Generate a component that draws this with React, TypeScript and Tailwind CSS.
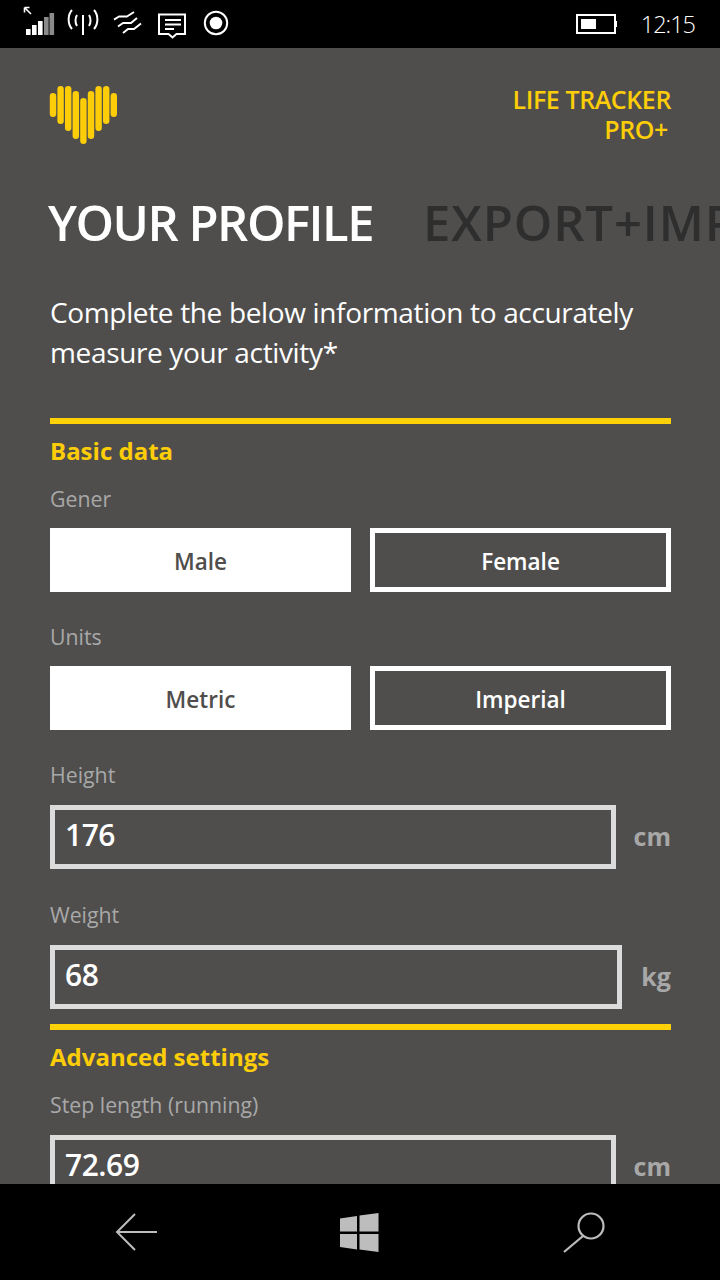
const bars = [
  [53, 93, 117],
  [60.6, 86, 124],
  [68.2, 86, 131],
  [75.8, 91, 139],
  [83.4, 98, 144],
  [91, 91, 139],
  [98.6, 86, 131],
  [106.2, 86, 124],
  [113.8, 93, 117],
];

function Logo() {
  return (
    <svg width="70" height="60" viewBox="49 85 70 60" className="block">
      {bars.map(([x, y1, y2]) => (
        <rect key={x} x={x - 3.2} y={y1} width="6.4" height={y2 - y1} rx="3.2" fill="#fdcd08" />
      ))}
    </svg>
  );
}

function StatusIcons() {
  return (
    <svg width="240" height="48" viewBox="0 0 240 48" className="block">
      {/* signal */}
      <path d="M24.5 7.5l6.5 6.500M24.500 7.500v5M24.500 7.500h5" stroke="#fff" strokeWidth="1.6" fill="none" />
      <rect x="26" y="29" width="4.6" height="6" fill="#fff" />
      <rect x="32" y="25" width="4.6" height="10" fill="#fff" />
      <rect x="38" y="21" width="4.6" height="14" fill="#fff" />
      <rect x="44" y="17" width="4.6" height="18" fill="#8a8a8a" />
      <rect x="49.5" y="13" width="4.6" height="22" fill="#8a8a8a" />
      {/* antenna */}
      <g stroke="#fff" strokeWidth="2" fill="none">
        <path d="M83 15v20" />
        <path d="M77 15c-2 3-2 8 0 11M89 15c2 3 2 8 0 11" />
        <path d="M72 10c-4.500 5-4.500 14 0 19M94 10c4.500 5 4.500 14 0 19" />
      </g>
      {/* data waves */}
      <g stroke="#fff" strokeWidth="2" fill="none" strokeLinejoin="round">
        <path d="M114 19.700l5-3.200h8l7-4.500" />
        <path d="M118 26.500l5-3.500h8l6-5" />
        <path d="M123 33l5-4h6l7-5.500" />
      </g>
      {/* message */}
      <path
        d="M159 14.500h26v19.500h-8.500l-4 3.500-4-3.500h-9.500z"
        stroke="#fff"
        strokeWidth="2"
        fill="none"
      />
      <path d="M165 20h16M165 24.500h16M165 29h9" stroke="#fff" strokeWidth="1.800" />
      {/* record */}
      <circle cx="216" cy="23" r="11.200" stroke="#fff" strokeWidth="2" fill="none" />
      <circle cx="216" cy="23" r="6.300" fill="#fff" />
    </svg>
  );
}

function Battery() {
  return (
    <svg width="41" height="20" viewBox="0 0 41 20" className="block">
      <rect x="1" y="1" width="38" height="18" stroke="#fff" strokeWidth="2" fill="none" />
      <rect x="5" y="5" width="15" height="10" fill="#fff" />
      <rect x="39" y="7" width="2" height="6" fill="#fff" />
    </svg>
  );
}

function BackIcon() {
  return (
    <svg width="44" height="40" viewBox="0 0 44 40" className="block">
      <path d="M20 2L2 20l18 18M2 20h40" stroke="#bdbdbd" strokeWidth="2" fill="none" />
    </svg>
  );
}

function WindowsIcon() {
  return (
    <svg width="39" height="39" viewBox="0 0 39 39" className="block">
      <path d="M0 5.500l17-2.500v15.500H0zM19.500 2.500L38.500 0v18.500h-19zM0 21h17v15.500L0 34zM19.500 21h19v18l-19-2.500z" fill="#bdbdbd" />
    </svg>
  );
}

function SearchIcon() {
  return (
    <svg width="44" height="42" viewBox="0 0 44 42" className="block">
      <circle cx="29" cy="15" r="12.500" stroke="#bdbdbd" strokeWidth="2.200" fill="none" />
      <path d="M21 25L2 41" stroke="#bdbdbd" strokeWidth="2.200" fill="none" />
    </svg>
  );
}

function ToggleRow({ left, right }: { left: string; right: string }) {
  return (
    <div className="grid grid-cols-2 gap-[19px] mt-[14px]">
      <div className="h-[64px] pt-[4px] bg-white flex items-center justify-center text-[22.5px] font-semibold text-[#4f4e4d]">
        {left}
      </div>
      <div className="h-[64px] pt-[4px] border-[5px] border-white flex items-center justify-center text-[22.5px] font-semibold text-white">
        {right}
      </div>
    </div>
  );
}

function Label({ text, className }: { text: string; className: string }) {
  return <div className={`h-[30px] leading-[30px] text-[21.3px] text-[#a8a8a8] ${className}`}>{text}</div>;
}

function NumberField({ value, unit, width }: { value: string; unit: string; width: string }) {
  return (
    <div className="flex items-center justify-between mt-[15px]">
      <div className={`h-[64px] pb-[6px] border-[5px] border-[#dcdcdc] flex items-center pl-[10px] text-[30px] font-semibold text-white tracking-[-0.5px] shrink-0 ${width}`}>
        {value}
      </div>
      <span className="text-[25px] font-bold text-[#a8a8a8]">{unit}</span>
    </div>
  );
}

export default function App() {
  return (
    <div className="w-[720px] h-[1280px] flex flex-col bg-black overflow-hidden font-['Open_Sans','Liberation_Sans',sans-serif]">
      {/* status bar */}
      <div className="h-[48px] shrink-0 flex items-center text-white">
        <StatusIcons />
        <div className="ml-auto">
          <Battery />
        </div>
        <span className="ml-[24px] mr-[25px] text-[23.5px] leading-[48px] font-light tracking-[-1px]">12:15</span>
      </div>

      <div className="flex-1 min-h-0 overflow-hidden bg-[#4f4e4d]">
        <div className="flex justify-between items-start pl-[49px] pr-[49px] pt-[37px]">
          <Logo />
          <div className="text-right text-[25px] leading-[30px] font-semibold text-[#fdcd08] tracking-[-0.4px] mt-[-1px]">
            <div>LIFE TRACKER</div>
            <div className="pr-[3px]">PRO+</div>
          </div>
        </div>

        {/* pivot headers */}
        <div className="flex gap-[50px] pl-[48px] mt-[45px] whitespace-nowrap text-[49px] leading-[64px] font-semibold tracking-[-1.5px]">
          <span className="text-white">YOUR PROFILE</span>
          <span className="text-[#2e2e2e] tracking-[0.9px]">EXPORT+IMP</span>
        </div>

        <div className="pl-[50px] pr-[49px]">
          <p className="mt-[38px] text-[28px] leading-[40px] text-white tracking-[-0.35px]">
            Complete the below information to accurately measure your activity*
          </p>

          <div className="h-[6px] bg-[#fed206] mt-[46px]" />
          <h2 className="mt-[10px] h-[34px] leading-[34px] text-[24px] font-bold text-[#fdcd08]">Basic data</h2>

          <Label text="Gener" className="mt-[16px]" />
          <ToggleRow left="Male" right="Female" />

          <Label text="Units" className="mt-[30px]" />
          <ToggleRow left="Metric" right="Imperial" />

          <Label text="Height" className="mt-[30px]" />
          <NumberField value="176" unit="cm" width="w-[566px]" />

          <Label text="Weight" className="mt-[31px]" />
          <NumberField value="68" unit="kg" width="w-[572px]" />

          <div className="h-[6px] bg-[#fed206] mt-[15px]" />
          <h2 className="mt-[10px] h-[34px] leading-[34px] text-[24px] font-bold text-[#fdcd08]">Advanced settings</h2>

          <Label text="Step length (running)" className="mt-[16px]" />
          <NumberField value="72.69" unit="cm" width="w-[566px]" />
        </div>
      </div>

      {/* nav bar */}
      <div className="h-[96px] shrink-0 bg-black flex items-center pl-[115px] pr-[114px] justify-between">
        <BackIcon />
        <div className="mr-[3px]">
          <WindowsIcon />
        </div>
        <SearchIcon />
      </div>
    </div>
  );
}
